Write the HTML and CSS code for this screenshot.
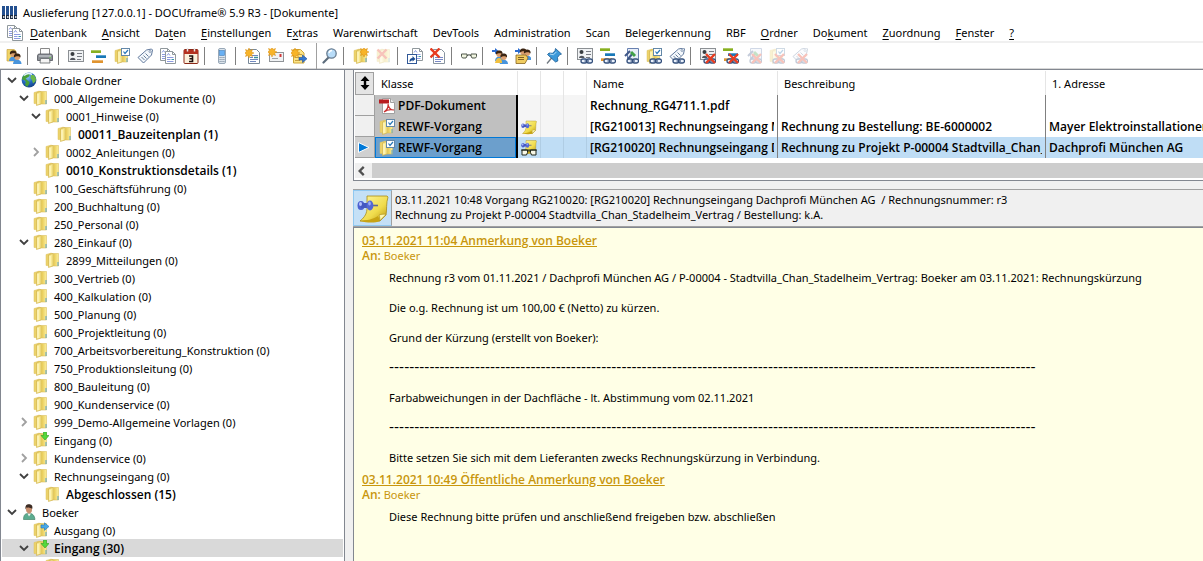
FILE: index.html
```html
<!doctype html>
<html lang="de">
<head>
	<meta charset="utf-8">
	<title>Auslieferung [127.0.0.1] - DOCUframe® 5.9 R3 - [Dokumente]</title>
	<link rel="stylesheet" href="styles.css">
</head>
<body>
	<!--Symbole-->
	<svg class="symbols" width="0" height="0" aria-hidden="true">
		<defs>
			<linearGradient id="gold" x1="0" x2="1" y1="0" y2="0">
				<stop offset="0" stop-color="#fdf3a8"/>
				<stop offset=".5" stop-color="#e9cd5c"/>
				<stop offset="1" stop-color="#fbef9c"/>
			</linearGradient>
			<linearGradient id="note" x1="0" x2="1" y1="0" y2="1">
				<stop offset="0" stop-color="#fdf6a0"/>
				<stop offset=".6" stop-color="#f0dc4c"/>
				<stop offset="1" stop-color="#b89410"/>
			</linearGradient>
			<radialGradient id="sea" cx=".4" cy=".3" r=".8">
				<stop offset="0" stop-color="#8cc8f4"/>
				<stop offset=".5" stop-color="#2468c0"/>
				<stop offset="1" stop-color="#123a7c"/>
			</radialGradient>
		</defs>
		<symbol id="folder" viewBox="0 0 16 16">
			<path d="M1 2.500 6.500 1v13L1 13.500z" fill="#ecd26a" stroke="#dcc060" stroke-width=".5"/>
			<path d="M5 1.500h8.500v12.500H5z" fill="url(#gold)" stroke="#dcc060" stroke-width=".6"/>
			<path d="M3.500 3 8 1.500v12.500L3.500 15.500z" fill="#f8e890" stroke="#ccae48" stroke-width=".6"/>
			<path d="M5 4v10" stroke="#fffbd8"/>
			<path d="M13 10v4" stroke="#58a0c8"/>
		</symbol>
		<symbol id="folder-in" viewBox="0 0 16 16">
			<use href="#folder"/>
			<path d="M10.500 0h3v3.500H16L12 8 8 3.500h2.500z" fill="#54d83c" stroke="#2ca020" stroke-width=".6"/>
		</symbol>
		<symbol id="folder-out" viewBox="0 0 16 16">
			<use href="#folder"/>
			<path d="M8 3h3.500V.8L16 4.500l-4.500 3.800V6H8z" fill="#48a8e8" stroke="#2074b8" stroke-width=".6"/>
		</symbol>
		<symbol id="star" viewBox="0 0 16 16">
			<path d="M4 0 5 2.500 7.500 1.500 6.500 4 9 5 6.500 6 7.500 8.500 5 7.500 4 10 3 7.500.5 8.500 1.500 6-1 5 1.500 4 .5 1.500 3 2.500z" fill="#f8b428" stroke="#d88c10" stroke-width=".5"/>
		</symbol>
		<symbol id="cross" viewBox="0 0 16 16">
			<path d="M1.500 1.500l9 9M10.500 1.500l-9 9" stroke="#e83c20" stroke-width="2.400" fill="none"/>
		</symbol>
		<symbol id="link" viewBox="0 0 16 16">
			<g fill="#e8f0fc" stroke="#34507c" stroke-width="1.300">
				<rect x="4" y="11" width="6" height="4" rx="2"/>
				<rect x="9.500" y="11" width="6" height="4" rx="2"/>
			</g>
			<path d="M7.500 13h4.500" stroke="#34507c" stroke-width="1.200"/>
		</symbol>
		<symbol id="folder-task" viewBox="0 0 16 16">
			<use href="#folder"/>
			<rect x="7.500" y=".5" width="8" height="7" fill="#fff" stroke="#6488a8"/>
			<path d="M9.500 3.500l1.500 2 3-3.500" fill="none" stroke="#2878b8" stroke-width="1.200"/>
		</symbol>
		<symbol id="folder-new" viewBox="0 0 16 16">
			<use href="#folder"/>
			<use href="#star" x="7" y="-1"/>
		</symbol>
		<symbol id="folder-delete" viewBox="0 0 16 16">
			<use href="#folder"/>
			<use href="#cross"/>
		</symbol>
		<symbol id="globe" viewBox="0 0 16 16">
			<circle cx="8" cy="8" r="7.400" fill="url(#sea)"/>
			<path d="M5 1.500C2.500 3 1 5 1 7.500l2.500.5 1.500 2-1 2.500 2 2.500c1-2 3-3 2.500-5L6 8 4.500 6.500 7.500 5 9 2.500z" fill="#48a038"/>
			<path d="M10 3l3 0 2 3.500-.5 3-2.500 2-1-3.500L9.500 6z" fill="#6cb848"/>
			<path d="M3 3.500q4-3.500 8-1" fill="none" stroke="#e4f4fc" stroke-width="1.500"/>
		</symbol>
		<symbol id="person" viewBox="0 0 16 16">
			<path d="M2.500 15.500c0-4 1.500-6 4-6h2.500c3 0 4.500 2.500 5 6z" fill="#5cac90" stroke="#34785c" stroke-width=".6"/>
			<path d="M6.500 9.500l1.500 3 2-3z" fill="#f4f4f0"/>
			<path d="M5 3c0-3 6-3 6 0v3c0 4.500-5.500 4.500-6 0z" fill="#c89070"/>
			<path d="M4.500 5.500C4 1 6 .2 8 .3s4 1 3.300 4.500C10 3.500 7 4 5.500 3.200z" fill="#3c2c24"/>
		</symbol>
		<symbol id="user-head" viewBox="0 0 16 16">
			<path d="M0 13c0-3 2-4.500 4-4.500s4.500 1.500 4.500 4.500z" fill="#4894dc"/>
			<circle cx="4.200" cy="6" r="2.900" fill="#dca070"/>
			<path d="M1 6.500C.5 3.500 2 2.500 4.200 2.500s4 1.500 3.200 4C6 4.500 3 5 1 6.500z" fill="#3a2412"/>
		</symbol>
		<symbol id="login" viewBox="0 0 16 16">
			<path d="M1 1.500h7l2 1.500v10H1z" fill="#f0d468" stroke="#c8a440" stroke-width=".7"/>
			<use href="#user-head" x="3" y="0"/>
			<use href="#user-head" x="7" y="3"/>
		</symbol>
		<symbol id="printer" viewBox="0 0 16 16">
			<path d="M3.500.5h9v6h-9z" fill="#fcfcfc" stroke="#888"/>
			<path d="M1.500 6h13l1 1.500v5H.5v-5z" fill="#8a8e94" stroke="#50545c" stroke-width=".8"/>
			<path d="M2 8h12" stroke="#d4d8dc"/>
			<path d="M3.500 10.500h9l.5 4.500H3z" fill="#f4f4f4" stroke="#606468" stroke-width=".8"/>
			<path d="M12.500 9.500h1.500" stroke="#68d848"/>
		</symbol>
		<symbol id="card" viewBox="0 0 16 16">
			<rect x=".5" y="2.500" width="15" height="11" fill="#f0f2f4" stroke="#8c9094"/>
			<circle cx="4.500" cy="6" r="2" fill="#383c40"/>
			<path d="M2 12c0-3 5.500-3 5.500 0z" fill="#50545c"/>
			<path d="M9 5.500h5M9 8.500h5M9 11.500h4" stroke="#787c84"/>
		</symbol>
		<symbol id="bars" viewBox="0 0 16 16">
			<path d="M0 3.500h10" stroke="#88b020" stroke-width="3"/>
			<path d="M5 8.500h10" stroke="#1878b8" stroke-width="3"/>
			<path d="M1 13.500h11" stroke="#e09430" stroke-width="3"/>
			<path d="M0 2.500h10M5 7.500h10M1 12.500h11" stroke="#fff" stroke-opacity=".3"/>
		</symbol>
		<symbol id="tag" viewBox="0 0 16 16">
			<path d="M1 9.500 9.500 2l5-1 1 1-1 5L6.500 15z" fill="#f4f8fc" stroke="#60789c"/>
			<circle cx="13" cy="3.500" r="1" fill="#fff" stroke="#60789c" stroke-width=".7"/>
			<path d="M4.500 9l3 3M6.500 7.500l3 3M8.500 5.500l3 3" stroke="#587090" stroke-width=".9"/>
		</symbol>
		<symbol id="doc" viewBox="0 0 16 16">
			<path d="M.5.500h7l3 3v9H.5z" fill="#fff" stroke="#90989c"/>
			<path d="M7.500.5v3h3" fill="none" stroke="#90989c"/>
			<path d="M2 4.500 3.500 2.500 5 4.500M2 6.500h6.500M2 8.500h3.500M2 10.500h6.500" fill="none" stroke="#7080d8" stroke-width=".8"/>
			<path d="M6.500 8.500h2.500" stroke="#3894a8"/>
		</symbol>
		<symbol id="docs" viewBox="0 0 16 16">
			<use href="#doc" x="0" y="0"/>
			<use href="#doc" x="5" y="3"/>
		</symbol>
		<symbol id="calendar" viewBox="0 0 16 16">
			<rect x="1" y="1.500" width="14" height="14" rx="1" fill="#fbf0dc" stroke="#8c2818"/>
			<path d="M1 2h14v4H1z" fill="#b43020"/>
			<path d="M4.500 0v3.500M11.500 0v3.500" stroke="#e8e8e8" stroke-width="1.500"/>
			<path d="M6 8h3.500v5.500H6M6.500 10.700h3" fill="none" stroke="#201010" stroke-width="1.600"/>
		</symbol>
		<symbol id="phone" viewBox="0 0 16 16">
			<rect x="4.500" y=".5" width="7" height="15" rx="1.500" fill="#dce4ec" stroke="#98a8b8"/>
			<rect x="5.500" y="2.500" width="5" height="5" fill="#68b0f4" stroke="#4480bc" stroke-width=".6"/>
			<path d="M5.500 9.500h5M5.500 11.500h5M5.500 13.500h5" stroke="#8494a4" stroke-dasharray="1.200 .7"/>
		</symbol>
		<symbol id="doc-new" viewBox="0 0 16 16">
			<path d="M3.500 1.500h8l3 3v11h-11z" fill="#fff" stroke="#788898"/>
			<path d="M5 7.500h8M5 9.500h3M5 11.500h8M5 13.500h6" stroke="#7088c0"/>
			<path d="M9 9.500h4" stroke="#389098" stroke-width="1.500"/>
			<use href="#star" x="0" y="0"/>
		</symbol>
		<symbol id="mail-new" viewBox="0 0 16 16">
			<rect x="1.500" y="4.500" width="14" height="9" fill="#f0f2f4" stroke="#909498"/>
			<path d="M4 10.500h6" stroke="#a0a4a8"/>
			<path d="M12.500 6v3" stroke="#d03838" stroke-width="2"/>
			<use href="#star" x="0" y="-1"/>
		</symbol>
		<symbol id="export" viewBox="0 0 16 16">
			<path d="M2.500 1.500h7l3.500 3.500v10H2.500z" fill="#fbe488" stroke="#d0a838"/>
			<path d="M4 9.500h4M4 12.500h5M7 6.500h4" stroke="#c8a040"/>
			<path d="M8 9.500h3.500V7L16 10.800l-4.500 3.800V12H8z" fill="#3478d0" stroke="#1c4c98" stroke-width=".6"/>
			<use href="#star" x="0" y="0"/>
		</symbol>
		<symbol id="search" viewBox="0 0 16 16">
			<path d="M1.500 14.500 6.500 9.500" stroke="#5c6c7c" stroke-width="2.200" stroke-linecap="round"/>
			<circle cx="9.500" cy="5.500" r="4.700" fill="#b8dcf8" stroke="#687c90" stroke-width="1.300"/>
			<path d="M7 5q.5-2.500 3-2.500" fill="none" stroke="#fff" stroke-width="1.300"/>
		</symbol>
		<symbol id="doc-link" viewBox="0 0 16 16">
			<use href="#doc" x="5" y="0"/>
			<rect x=".5" y="6.500" width="9" height="9" fill="#fff" stroke="#305898"/>
			<path d="M2.500 14c0-3 1-4 3-4V8l3 3-3 2.500V12" fill="#1c4c94"/>
		</symbol>
		<symbol id="doc-delete" viewBox="0 0 16 16">
			<path d="M3.500 1.500h8l3 3v11h-11z" fill="#fff" stroke="#8894a0"/>
			<path d="M5 9.500h8M5 11.500h8M5 13.500h6" stroke="#7888c8"/>
			<use href="#cross" x="-1" y="-1"/>
		</symbol>
		<symbol id="glasses" viewBox="0 0 16 16">
			<path d="M.5 6h5.500v2l-1 2h-3.500L.5 8.500zM10 6h5.500v2.500l-1 1.500H11l-1-2z" fill="#f0f4e0" stroke="#50584c"/>
			<path d="M6 7.500q2-1.500 4 0" fill="none" stroke="#384038"/>
		</symbol>
		<symbol id="users-send" viewBox="0 0 16 16">
			<path d="M0 2h3V0l3.500 3L3 6V4H0z" fill="#2c6cd0"/>
			<use href="#user-head" x="3" y="0"/>
			<use href="#user-head" x="7.500" y="3"/>
			<path d="M3 15q1-5 4-5t3 5z" fill="#f0c040"/>
		</symbol>
		<symbol id="users-folder" viewBox="0 0 16 16">
			<path d="M0 2h3V0l3.500 3L3 6V4H0z" fill="#2c6cd0"/>
			<use href="#user-head" x="4" y="-2"/>
			<use href="#user-head" x="8" y="-1"/>
			<path d="M1 7h10l2 3-3 5.500H1z" fill="#f0cc60" stroke="#886420" stroke-width=".8"/>
			<path d="M3 9.500h6M3 11.500h6" stroke="#806028"/>
		</symbol>
		<symbol id="pin" viewBox="0 0 16 16">
			<path d="M1 15.500 6 9.500" stroke="#707880" stroke-width="1.300"/>
			<path d="M9.500.5l6 5.500-2 .8-2 2.700.3 3.500L9.500 14 1.500 6.500 3 5l3.500.3 2.500-2.500z" fill="#3c98d8" stroke="#1c5c94" stroke-width=".8"/>
			<path d="M4 6l3.500.8 3-3" fill="none" stroke="#b0dcf8"/>
		</symbol>
		<symbol id="card-link" viewBox="0 0 16 16"><use href="#card" y="-2"/><use href="#link"/></symbol>
		<symbol id="bars-link" viewBox="0 0 16 16"><use href="#bars" y="-2"/><use href="#link"/></symbol>
		<symbol id="copy-link" viewBox="0 0 16 16">
			<path d="M4.500.5h11v11h-11z" fill="#e8eef8" stroke="#6880b0"/>
			<path d="M2 8l5-5M5 11l5-6" stroke="#405888" stroke-width="2"/>
			<path d="M8 4l4 4" stroke="#40a048" stroke-width="3"/>
			<use href="#link"/>
		</symbol>
		<symbol id="task-link" viewBox="0 0 16 16"><use href="#folder-task"/><use href="#link"/></symbol>
		<symbol id="tag-link" viewBox="0 0 16 16"><use href="#tag" y="-1"/><use href="#link"/></symbol>
		<symbol id="card-cut" viewBox="0 0 16 16"><use href="#card-link"/><use href="#cross" x="4.500" y="4.500"/></symbol>
		<symbol id="bars-cut" viewBox="0 0 16 16"><use href="#bars-link"/><use href="#cross" x="4.500" y="4.500"/></symbol>
		<symbol id="copy-cut" viewBox="0 0 16 16"><use href="#copy-link"/><use href="#cross" x="4.500" y="4.500"/></symbol>
		<symbol id="task-cut" viewBox="0 0 16 16"><use href="#task-link"/><use href="#cross" x="4.500" y="4.500"/></symbol>
		<symbol id="tag-cut" viewBox="0 0 16 16"><use href="#tag-link"/><use href="#cross" x="4.500" y="4.500"/></symbol>
		<symbol id="pdf" viewBox="0 0 16 16">
			<path d="M3.500.5h8l4 4v11h-12z" fill="#fff" stroke="#a0a0a0"/>
			<path d="M0 1.500h10v4H0z" fill="#b81c20"/>
			<path d="M11.500.5v4h4" fill="#e8e8e8" stroke="#a0a0a0"/>
			<path d="M5 14c3-2 4.500-5 4-8 .5 4 3 6 6 6-3-.7-7-.3-10 2z" fill="none" stroke="#c83030" stroke-width="1.200"/>
		</symbol>
		<symbol id="memo" viewBox="0 0 32 32">
			<path d="M10 4h20l1 1c-2 6-1 13-2 18l-6 6H3c5-4 7-8 7-13z" fill="url(#note)" stroke="#a88c18" stroke-width=".8"/>
			<path d="M3 29c7-1 12-1 18-5l2 5c-5 2-12 2-20 0z" fill="#c8a414"/>
			<path d="M29 22.500c-2-.5-4-.5-7 .5 1 2 1 4 .5 6z" fill="#fff8b0" stroke="#a88c18" stroke-width=".6"/>
			<path d="M15 13.500h6" stroke="#606890" stroke-width="1.600"/>
			<ellipse cx="4" cy="13.500" rx="3.500" ry="4.500" fill="#4c60d0"/>
			<path d="M4 11h8v5H4z" fill="#4458c0"/>
			<ellipse cx="13" cy="13.500" rx="3.400" ry="5" fill="#5468d4"/>
			<ellipse cx="3.500" cy="12" rx="1.500" ry="2" fill="#b4c0fc"/>
			<ellipse cx="12.500" cy="11.500" rx="1.300" ry="2" fill="#9cacf8"/>
		</symbol>
		<symbol id="memo-glasses" viewBox="0 0 32 32">
			<use href="#memo" y="-3"/>
			<path d="M2 20h11v5l-2 5H2zM19 20h11v10h-9l-2-5z" fill="#f8f8e8" stroke="#20281c" stroke-width="2"/>
			<path d="M13 22h6M0 20h32" stroke="#20281c" stroke-width="2"/>
		</symbol>
		<symbol id="logo" viewBox="0 0 16 15">
			<path d="M1.500 1v9M5.500 1v9M9.500 1v9M13.500 1v9" stroke="#245090" stroke-width="3"/>
			<path d="M1.500 10v4M5.500 10v4M9.500 10v4M13.500 10v4" stroke="#182840" stroke-width="3"/>
			<path d="M1 12h1.500M5 12h1.500M9 12h1.500M13 12h1.500" stroke="#fff" stroke-width="1.500"/>
		</symbol>
		<symbol id="arrow" viewBox="0 0 12 12">
			<path d="M2 4l4 4 4-4" fill="none" stroke="currentColor" stroke-width="1.800"/>
		</symbol>
		<symbol id="sort" viewBox="0 0 10 14">
			<path d="M5 0l4.500 5H6.200v4h3.300L5 14 .5 9h3.300V5H.5z"/>
		</symbol>
	</svg>

	<header class="titlebar">
		<svg class="logo"><use href="#logo"/></svg>
		<h1>Auslieferung [127.0.0.1] - DOCUframe® 5.9 R3 - [Dokumente]</h1>
	</header>

	<nav class="menubar">
		<svg class="icon"><use href="#docs"/></svg>
		<button><u>D</u>atenbank</button>
		<button><u>A</u>nsicht</button>
		<button>Da<u>t</u>en</button>
		<button><u>E</u>instellungen</button>
		<button>E<u>x</u>tras</button>
		<button>Warenwirtschaft</button>
		<button>DevTools</button>
		<button>Administration</button>
		<button>Scan</button>
		<button>Belegerkennung</button>
		<button>RBF</button>
		<button><u>O</u>rdner</button>
		<button>Do<u>k</u>ument</button>
		<button><u>Z</u>uordnung</button>
		<button><u>F</u>enster</button>
		<button><u>?</u></button>
	</nav>

	<div class="toolbar" role="toolbar">
		<button aria-label="Anmelden"><svg class="icon"><use href="#login"/></svg></button>
		<span class="sep"></span>
		<button aria-label="Drucken"><svg class="icon"><use href="#printer"/></svg></button>
		<span class="sep"></span>
		<button aria-label="Adressen"><svg class="icon"><use href="#card"/></svg></button>
		<button aria-label="Projekte"><svg class="icon"><use href="#bars"/></svg></button>
		<button aria-label="Vorgänge"><svg class="icon"><use href="#folder-task"/></svg></button>
		<button aria-label="Artikel"><svg class="icon"><use href="#tag"/></svg></button>
		<button aria-label="Dokumente"><svg class="icon"><use href="#docs"/></svg></button>
		<button aria-label="Kalender"><svg class="icon"><use href="#calendar"/></svg></button>
		<span class="sep"></span>
		<button aria-label="Telefon"><svg class="icon"><use href="#phone"/></svg></button>
		<span class="sep"></span>
		<button aria-label="Neues Dokument"><svg class="icon"><use href="#doc-new"/></svg></button>
		<button aria-label="Neue E-Mail"><svg class="icon"><use href="#mail-new"/></svg></button>
		<button aria-label="Exportieren"><svg class="icon"><use href="#export"/></svg></button>
		<span class="sep group"></span>
		<button aria-label="Suchen"><svg class="icon"><use href="#search"/></svg></button>
		<span class="sep"></span>
		<button aria-label="Neuer Ordner"><svg class="icon"><use href="#folder-new"/></svg></button>
		<button aria-label="Ordner löschen" disabled><svg class="icon"><use href="#folder-delete"/></svg></button>
		<span class="sep"></span>
		<button aria-label="Dokument verknüpfen"><svg class="icon"><use href="#doc-link"/></svg></button>
		<button aria-label="Dokument löschen"><svg class="icon"><use href="#doc-delete"/></svg></button>
		<span class="sep"></span>
		<button aria-label="Gelesen"><svg class="icon"><use href="#glasses"/></svg></button>
		<span class="sep"></span>
		<button aria-label="Senden an"><svg class="icon"><use href="#users-send"/></svg></button>
		<button aria-label="Verteilen"><svg class="icon"><use href="#users-folder"/></svg></button>
		<span class="sep"></span>
		<button aria-label="Anheften"><svg class="icon"><use href="#pin"/></svg></button>
		<span class="sep"></span>
		<button aria-label="Adresse zuordnen"><svg class="icon"><use href="#card-link"/></svg></button>
		<button aria-label="Projekt zuordnen"><svg class="icon"><use href="#bars-link"/></svg></button>
		<button aria-label="Kopie zuordnen"><svg class="icon"><use href="#copy-link"/></svg></button>
		<button aria-label="Vorgang zuordnen"><svg class="icon"><use href="#task-link"/></svg></button>
		<button aria-label="Artikel zuordnen"><svg class="icon"><use href="#tag-link"/></svg></button>
		<span class="sep"></span>
		<button aria-label="Adresse lösen"><svg class="icon"><use href="#card-cut"/></svg></button>
		<button aria-label="Projekt lösen"><svg class="icon"><use href="#bars-cut"/></svg></button>
		<button aria-label="Kopie lösen" disabled><svg class="icon"><use href="#copy-cut"/></svg></button>
		<button aria-label="Vorgang lösen" disabled><svg class="icon"><use href="#task-cut"/></svg></button>
		<button aria-label="Artikel lösen" disabled><svg class="icon"><use href="#tag-cut"/></svg></button>
	</div>

	<div class="workspace">
		<!--Ordnerbaum-->
		<ul class="tree">
			<li class="l0"><button class="toggle open" aria-label="Zuklappen"><svg><use href="#arrow"/></svg></button><svg class="icon"><use href="#globe"/></svg>Globale Ordner</li>
			<li class="l1"><button class="toggle open" aria-label="Zuklappen"><svg><use href="#arrow"/></svg></button><svg class="icon"><use href="#folder"/></svg>000_Allgemeine Dokumente (0)</li>
			<li class="l2"><button class="toggle open" aria-label="Zuklappen"><svg><use href="#arrow"/></svg></button><svg class="icon"><use href="#folder"/></svg>0001_Hinweise (0)</li>
			<li class="l3 unread"><svg class="icon"><use href="#folder"/></svg>00011_Bauzeitenplan (1)</li>
			<li class="l2"><button class="toggle" aria-label="Aufklappen"><svg><use href="#arrow"/></svg></button><svg class="icon"><use href="#folder"/></svg>0002_Anleitungen (0)</li>
			<li class="l2 unread"><svg class="icon"><use href="#folder"/></svg>0010_Konstruktionsdetails (1)</li>
			<li class="l1"><svg class="icon"><use href="#folder"/></svg>100_Geschäftsführung (0)</li>
			<li class="l1"><svg class="icon"><use href="#folder"/></svg>200_Buchhaltung (0)</li>
			<li class="l1"><svg class="icon"><use href="#folder"/></svg>250_Personal (0)</li>
			<li class="l1"><button class="toggle open" aria-label="Zuklappen"><svg><use href="#arrow"/></svg></button><svg class="icon"><use href="#folder"/></svg>280_Einkauf (0)</li>
			<li class="l2"><svg class="icon"><use href="#folder"/></svg>2899_Mitteilungen (0)</li>
			<li class="l1"><svg class="icon"><use href="#folder"/></svg>300_Vertrieb (0)</li>
			<li class="l1"><svg class="icon"><use href="#folder"/></svg>400_Kalkulation (0)</li>
			<li class="l1"><svg class="icon"><use href="#folder"/></svg>500_Planung (0)</li>
			<li class="l1"><svg class="icon"><use href="#folder"/></svg>600_Projektleitung (0)</li>
			<li class="l1"><svg class="icon"><use href="#folder"/></svg>700_Arbeitsvorbereitung_Konstruktion (0)</li>
			<li class="l1"><svg class="icon"><use href="#folder"/></svg>750_Produktionsleitung (0)</li>
			<li class="l1"><svg class="icon"><use href="#folder"/></svg>800_Bauleitung (0)</li>
			<li class="l1"><svg class="icon"><use href="#folder"/></svg>900_Kundenservice (0)</li>
			<li class="l1"><button class="toggle" aria-label="Aufklappen"><svg><use href="#arrow"/></svg></button><svg class="icon"><use href="#folder"/></svg>999_Demo-Allgemeine Vorlagen (0)</li>
			<li class="l1"><svg class="icon"><use href="#folder-in"/></svg>Eingang (0)</li>
			<li class="l1"><button class="toggle" aria-label="Aufklappen"><svg><use href="#arrow"/></svg></button><svg class="icon"><use href="#folder"/></svg>Kundenservice (0)</li>
			<li class="l1"><button class="toggle open" aria-label="Zuklappen"><svg><use href="#arrow"/></svg></button><svg class="icon"><use href="#folder"/></svg>Rechnungseingang (0)</li>
			<li class="l2 unread"><svg class="icon"><use href="#folder"/></svg>Abgeschlossen (15)</li>
			<li class="l0"><button class="toggle open" aria-label="Zuklappen"><svg><use href="#arrow"/></svg></button><svg class="icon"><use href="#person"/></svg>Boeker</li>
			<li class="l1"><svg class="icon"><use href="#folder-out"/></svg>Ausgang (0)</li>
			<li class="l1 unread selected"><button class="toggle open" aria-label="Zuklappen"><svg><use href="#arrow"/></svg></button><svg class="icon"><use href="#folder-in"/></svg>Eingang (30)</li>
			<li class="l2"><svg class="icon"><use href="#folder"/></svg></li>
		</ul>

		<main class="content">
			<!--Liste der Dokumente-->
			<section class="grid">
				<table>
					<colgroup>
						<col class="c-mark"><col class="c-class"><col class="c-flag"><col class="c-flag"><col class="c-flag"><col class="c-name"><col class="c-text"><col>
					</colgroup>
					<thead>
						<tr>
							<th class="mark"><button aria-label="Sortieren"><svg class="sort"><use href="#sort"/></svg></button></th>
							<th>Klasse</th>
							<th></th>
							<th></th>
							<th></th>
							<th>Name</th>
							<th>Beschreibung</th>
							<th>1. Adresse</th>
						</tr>
					</thead>
					<tbody>
						<tr>
							<td class="mark"></td>
							<td class="class"><svg class="icon"><use href="#pdf"/></svg>PDF-Dokument</td>
							<td class="flag"></td>
							<td class="flag"></td>
							<td class="flag"></td>
							<td>Rechnung_RG4711.1.pdf</td>
							<td></td>
							<td></td>
						</tr>
						<tr>
							<td class="mark"></td>
							<td class="class"><svg class="icon"><use href="#folder-task"/></svg>REWF-Vorgang</td>
							<td class="flag"><svg class="icon"><use href="#memo"/></svg></td>
							<td class="flag"></td>
							<td class="flag"></td>
							<td><div class="clip">[RG210013] Rechnungseingang M</div></td>
							<td>Rechnung zu Bestellung: BE-6000002</td>
							<td>Mayer Elektroinstallationen</td>
						</tr>
						<tr class="current">
							<td class="mark"><svg class="pointer" viewBox="0 0 12 11"><path d="M.5.500 11 5.500.5 10.500z"/></svg></td>
							<td class="class"><svg class="icon"><use href="#folder-task"/></svg>REWF-Vorgang</td>
							<td class="flag"><svg class="icon"><use href="#memo-glasses"/></svg></td>
							<td class="flag"></td>
							<td class="flag"></td>
							<td><div class="clip">[RG210020] Rechnungseingang D</div></td>
							<td><div class="clip">Rechnung zu Projekt P-00004 Stadtvilla_Chan_S</div></td>
							<td>Dachprofi München AG</td>
						</tr>
					</tbody>
				</table>
				<div class="scrollbar">
					<button aria-label="Nach links"><svg viewBox="0 0 12 12"><path d="M7.500 2.500 4 6l3.500 3.500"/></svg></button>
					<div class="thumb"></div>
				</div>
			</section>

			<section class="summary">
				<div class="badge"><svg><use href="#memo"/></svg></div>
				<p>03.11.2021 10:48 Vorgang RG210020: [RG210020] Rechnungseingang Dachprofi München AG&nbsp; / Rechnungsnummer: r3<br>
				Rechnung zu Projekt P-00004 Stadtvilla_Chan_Stadelheim_Vertrag / Bestellung: k.A.</p>
			</section>

			<!--Anmerkungen zum gewählten Vorgang-->
			<section class="notes">
				<article>
					<h2>03.11.2021 11:04 Anmerkung von Boeker</h2>
					<div class="to"><b>An:</b> Boeker</div>
					<div class="text">
						<p>Rechnung r3 vom 01.11.2021 / Dachprofi München AG / P-00004 - Stadtvilla_Chan_Stadelheim_Vertrag: Boeker am 03.11.2021: Rechnungskürzung</p>
						<p>Die o.g. Rechnung ist um 100,00 € (Netto) zu kürzen.</p>
						<p>Grund der Kürzung (erstellt von Boeker):</p>
						<p class="dashes">--------------------------------------------------------------------------------------------------------------------------------</p>
						<p>Farbabweichungen in der Dachfläche - lt. Abstimmung vom 02.11.2021</p>
						<p class="dashes">--------------------------------------------------------------------------------------------------------------------------------</p>
						<p>Bitte setzen Sie sich mit dem Lieferanten zwecks Rechnungskürzung in Verbindung.</p>
					</div>
				</article>
				<article>
					<h2>03.11.2021 10:49 Öffentliche Anmerkung von Boeker</h2>
					<div class="to"><b>An:</b> Boeker</div>
					<div class="text">
						<p>Diese Rechnung bitte prüfen und anschließend freigeben bzw. abschließen</p>
					</div>
				</article>
			</section>
		</main>
	</div>
</body>
</html>
```
FILE: styles.css
```css
* {
	box-sizing: border-box;
}

body {
	margin: 0;
	height: 100vh;
	display: flex;
	flex-direction: column;
	overflow: hidden;
	background-color: #fff;
	color: #000;
	font-family: "Noto Sans", "Open Sans", sans-serif;
	font-size: 11px;
	line-height: 15px;
	white-space: nowrap;
}

button {
	border: 0;
	padding: 0;
	background: none;
	font: inherit;
	color: inherit;
}

svg {
	display: block;
	flex: none;
}

.symbols {
	position: absolute;
}

.icon {
	width: 16px;
	height: 16px;
}

/*Titelzeile und Menü*/

.titlebar {
	display: flex;
	align-items: center;
	gap: 5px;
	height: 24px;
	padding-left: 2px;
}

.titlebar h1 {
	margin: 0;
	font-size: 11px;
	font-weight: normal;
}

.logo {
	width: 16px;
	height: 15px;
}

.menubar {
	display: flex;
	align-items: center;
	gap: 15px;
	height: 19px;
	padding-left: 7px;
	border-bottom: 2px solid #f0f0f0;
}

.menubar .icon {
	margin-right: -8px;
}

.menubar u {
	text-underline-offset: 2px;
}

/*Werkzeugleiste*/

.toolbar {
	display: flex;
	height: 27px;
	padding-left: 3px;
	border-bottom: 1px solid #828790;
	box-shadow: inset 0 -1px #d8d8d8;
}

.toolbar button {
	width: 23px;
	padding: 0 4px 0 3px;
}

.toolbar button:disabled {
	opacity: .3;
}

.sep {
	width: 8px;
	padding: 4px 0 4px 1px;
}

.sep::before {
	content: "";
	display: block;
	width: 1px;
	height: 18px;
	background-color: #808080;
}

.sep.group {
	padding: 0 0 0 5px;
}

.sep.group::before {
	height: 26px;
	background-color: #a0a0a0;
}

/*Ordnerbaum*/

.workspace {
	flex: 1;
	min-height: 0;
	display: flex;
	gap: 8px;
	background-color: #f0f0f0;
}

.tree {
	flex: none;
	width: 345px;
	margin: 0;
	padding: 1px 1px 0;
	border: solid #828790;
	border-width: 0 1px;
	background-color: #fff;
	list-style: none;
	overflow: hidden;
}

.tree li {
	display: flex;
	align-items: center;
	gap: 5px;
	height: 18px;
}

.tree .l0 {
	padding-left: 19px;
}

.tree .l1 {
	padding-left: 31px;
}

.tree .l2 {
	padding-left: 43px;
}

.tree .l3 {
	padding-left: 55px;
}

.unread,
.grid td,
.notes h2,
.to b {
	font-family: "Open Sans", "Noto Sans", sans-serif;
	font-size: 12px;
	font-weight: 600;
}

.selected {
	background-color: #d9d9d9;
}

.toggle {
	width: 12px;
	margin-left: -15px;
	margin-right: -2px;
	color: #a0a0a0;
}

.toggle svg {
	width: 12px;
	height: 12px;
	transform: rotate(-90deg);
}

.toggle.open {
	color: #404040;
}

.toggle.open svg {
	transform: none;
}

/*Dokumentliste*/

.content {
	flex: 1;
	min-width: 0;
	display: flex;
	flex-direction: column;
}

.grid {
	padding: 1px 0 2px 1px;
	border: solid #828790;
	border-width: 0 0 1px 1px;
	background-color: #fff;
}

.grid table {
	width: 100%;
	table-layout: fixed;
	border-collapse: separate;
	border-spacing: 0;
}

.c-mark {
	width: 20px;
}

.c-class {
	width: 143px;
}

.c-flag {
	width: 23px;
}

.c-name {
	width: 191px;
}

.c-text {
	width: 268px;
}

.grid th {
	height: 24px;
	padding: 0 6px;
	border-right: 1px solid #e5e5e5;
	font-weight: normal;
	text-align: left;
}

.grid th.mark {
	padding: 0;
	border: 0;
}

.mark button {
	display: flex;
	align-items: center;
	justify-content: center;
	width: 19px;
	height: 23px;
	border: 1px solid #a0a0a0;
	background-color: #e4e4e4;
}

.sort {
	width: 10px;
	height: 14px;
}

.grid td {
	height: 21px;
	padding: 0 3px;
	border-right: 1px solid #808080;
}

.clip {
	overflow: hidden;
}

.grid td:last-child,
.grid th:last-child {
	border-right: 0;
}

.grid td.mark {
	border-right-color: #a0a0a0;
	border-bottom: 1px solid #a0a0a0;
	background-color: #f0f0f0;
}

.grid td.class {
	padding: 0 4px;
	border-right: 2px solid #000;
	background-color: #c0c0c0;
}

.class .icon {
	float: left;
	margin-right: 3px;
}

.grid td.flag {
	border-right-color: #e5e5e5;
	background-color: #f5f5f5;
}

.grid .current td {
	background-color: #bfddf5;
}

.grid .current td.mark {
	background-color: #d0d0d0;
}

.grid .current td.flag {
	border-right-color: #b0cde4;
}

.grid .current td.class {
	background-color: #6c9fcc;
	box-shadow: inset 0 0 0 1px #0078d7;
}

.pointer {
	width: 12px;
	height: 11px;
	fill: #0078d7;
	stroke: #fff;
}

.scrollbar {
	display: flex;
	height: 15px;
	margin-top: 5px;
}

.scrollbar button {
	width: 17px;
	background-color: #f0f0f0;
}

.scrollbar svg {
	width: 14px;
	height: 14px;
	fill: none;
	stroke: #505050;
	stroke-width: 2;
}

.thumb {
	flex: 1;
	background-color: #cdcdcd;
}

/*Kopf des Vorgangs*/

.summary {
	display: flex;
	margin-top: 8px;
	border-top: 1px solid #a0a0a0;
	border-bottom: 1px solid #a0a0a0;
}

.summary p {
	margin: 0;
	padding: 2px 3px;
}

.badge {
	width: 39px;
	padding: 1px 3px;
	border: 1px solid #90c8f0;
	border-right-color: #a0a0a0;
	background-color: #c4e0f6;
}

.badge svg {
	width: 32px;
	height: 32px;
}

/*Anmerkungen*/

.notes {
	flex: 1;
	padding: 5px 8px;
	border: solid #828790;
	border-width: 1px 0 0 1px;
	background-color: #ffffe6;
	overflow: hidden;
}

.notes h2 {
	margin: 0;
	text-decoration: underline;
}

.notes h2,
.to {
	color: #c8960c;
}

.text {
	padding: 7px 0 7px 27px;
}

.text p {
	margin: 0 0 15px;
}

.text p:last-child {
	margin: 0;
}

.dashes {
	font-family: "DejaVu Sans", sans-serif;
	font-size: 14px;
}
```
